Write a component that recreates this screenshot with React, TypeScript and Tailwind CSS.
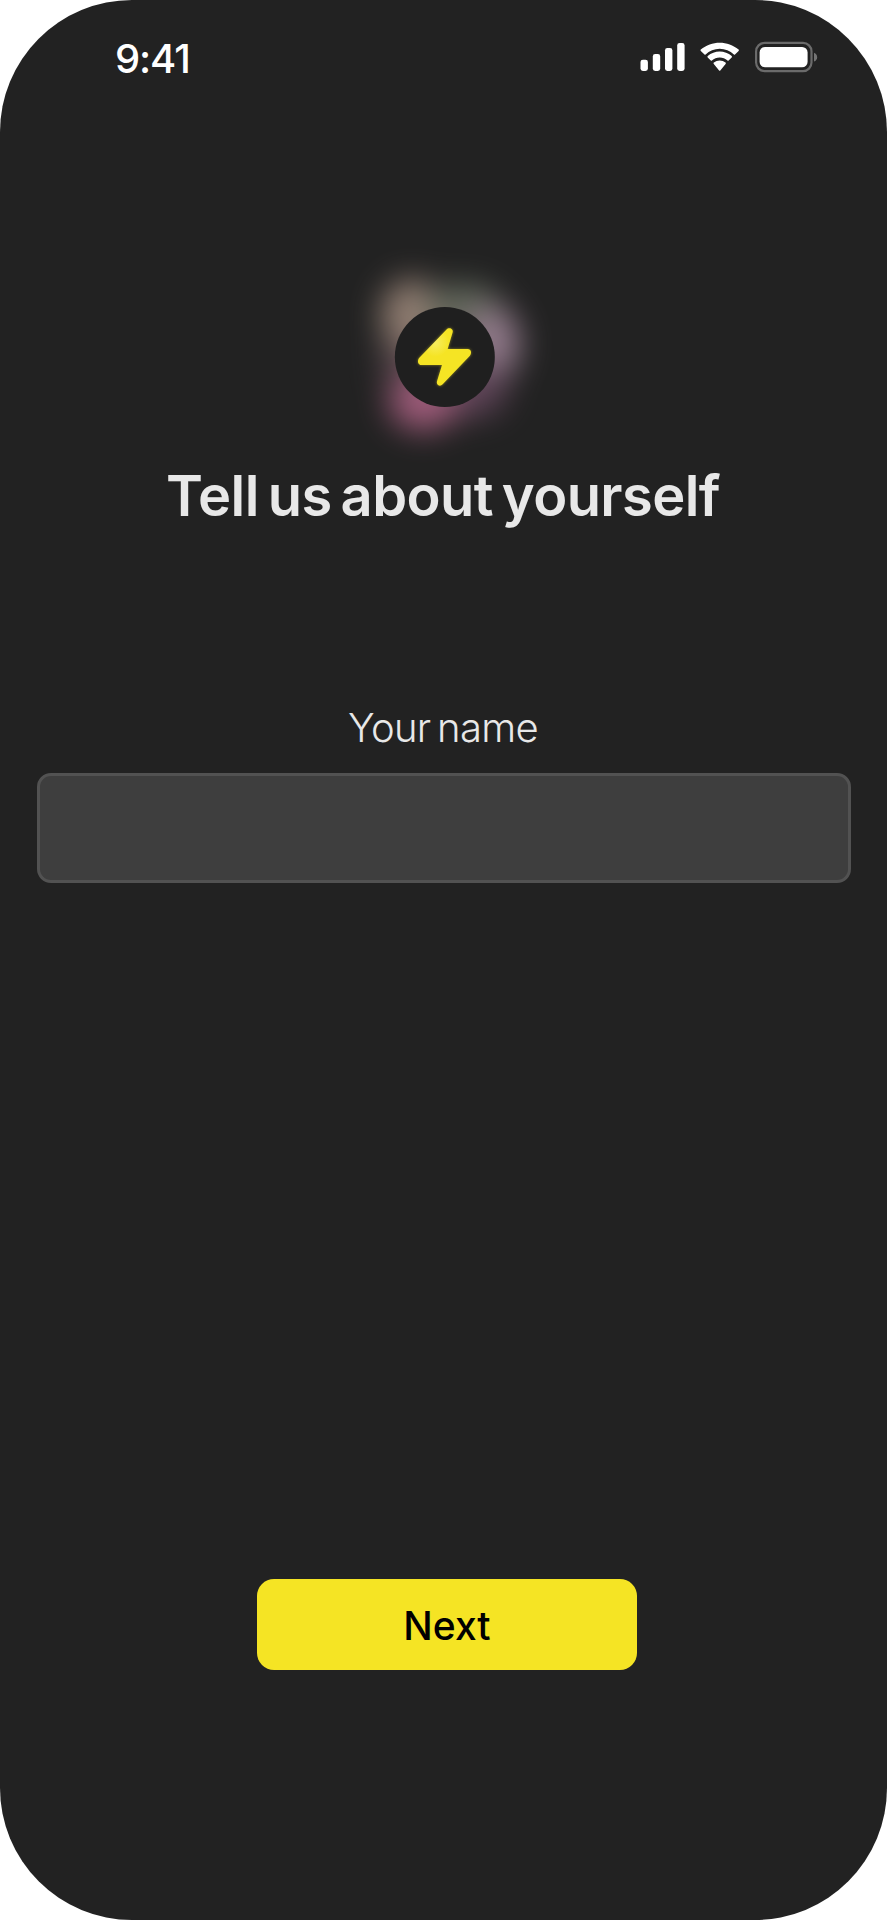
import React from "react";

function SignalIcon() {
  return (
    <svg width="46" height="30" viewBox="0 0 46 30" fill="#fff">
      <rect x="0.5" y="17.7" width="7.4" height="11.3" rx="2.4" />
      <rect x="12.8" y="12" width="7.4" height="17" rx="2.4" />
      <rect x="25" y="6" width="7.4" height="23" rx="2.4" />
      <rect x="37.2" y="1" width="7.4" height="28" rx="2.4" />
    </svg>
  );
}

function WifiIcon() {
  return (
    <svg width="40" height="30" viewBox="0 0 40 30" fill="#fff">
      <path d="M19.7 6.7c5.3 0 10.4 2.1 14.2 5.7.3.3.8.3 1.1 0l3.6-3.4c.4-.4.4-1 0-1.4C28-1.6 11.4-1.6.8 7.6c-.4.4-.4 1 0 1.4l3.7 3.4c.3.3.8.3 1.1 0C9.3 8.8 14.4 6.7 19.7 6.7z" />
      <path d="M19.7 15.5c2.9 0 5.7 1.1 7.8 3 .3.3.8.3 1.1 0l3.1-3c.4-.4.4-1 0-1.4-6.7-6.2-17.3-6.2-24 0-.4.4-.4 1 0 1.4l3.1 3c.3.3.8.3 1.1 0 2.1-1.9 4.9-3 7.8-3z" />
      <path d="M25.6 21.9c.4-.4.4-1-.1-1.3-3.3-2.8-8.3-2.8-11.6 0-.5.3-.5.9-.1 1.3l5.3 6.5c.3.4.9.4 1.2 0z" />
    </svg>
  );
}

function BatteryIcon() {
  return (
    <svg width="64" height="32" viewBox="0 0 64 32">
      <rect x="1.1" y="1.9" width="55.4" height="28.2" rx="8.5" fill="none" stroke="#6b6b6b" strokeWidth="2.2" />
      <rect x="4.6" y="5.9" width="48" height="20.4" rx="5.5" fill="#fff" />
      <path d="M59 11.8v8.8c2-.8 3.2-2.5 3.2-4.4s-1.2-3.6-3.2-4.4z" fill="#747474" />
    </svg>
  );
}

function StatusBar() {
  return (
    <header className="flex h-[116px] w-full items-start justify-between pl-[115px]">
      <span className="mt-[35px] text-[40px] leading-[48px] font-medium tracking-[-1.1px] text-white">9:41</span>
      <div className="mr-[68px] flex items-start pt-[41px]">
        <div className="mt-px mr-[14px]">
          <SignalIcon />
        </div>
        <div className="mt-px mr-[15px]">
          <WifiIcon />
        </div>
        <BatteryIcon />
      </div>
    </header>
  );
}

const BOLT =
  "M319 269 C327 260 341 266 338 277 L323 327 H383 C394 327 396 340 389 348 L308 433 C300 442 288 435 291 424 L306 375 H245 C233 375 231 361 238 353 Z";

function Logo() {
  return (
    <svg className="ml-[13px] block" width="240" height="240" viewBox="-30 -30 720 720">
      <defs>
        <filter id="glow" x="-50%" y="-50%" width="200%" height="200%" colorInterpolationFilters="sRGB">
          <feGaussianBlur stdDeviation="48" />
        </filter>
        <filter id="halo" x="-30%" y="-30%" width="160%" height="160%" colorInterpolationFilters="sRGB">
          <feGaussianBlur stdDeviation="4" />
        </filter>
        <radialGradient id="shine" gradientUnits="userSpaceOnUse" cx="286" cy="308" r="42">
          <stop offset="0" stopColor="#f7ee60" />
          <stop offset="1" stopColor="#f5e424" />
        </radialGradient>
      </defs>
      <g filter="url(#glow)" opacity="0.85">
        <circle cx="314" cy="345" r="190" fill="#5c4a50" />
        <ellipse cx="215" cy="225" rx="92" ry="108" fill="#a58e80" />
        <ellipse cx="370" cy="205" rx="115" ry="72" fill="#6d7465" />
        <ellipse cx="460" cy="310" rx="80" ry="112" fill="#a78b9f" />
        <ellipse cx="400" cy="450" rx="100" ry="80" fill="#684960" />
        <ellipse cx="250" cy="485" rx="104" ry="86" fill="#b5668a" />
      </g>
      <circle cx="314.5" cy="351" r="150" fill="#1f1f1f" />
      <path d={BOLT} fill="#f5e424" opacity="0.5" filter="url(#halo)" />
      <path d={BOLT} fill="url(#shine)" />
    </svg>
  );
}

export default function App() {
  return (
    <div className="h-[1920px] w-[887px] bg-white font-['Inter',sans-serif]">
      <main className="flex h-full w-full flex-col items-center overflow-hidden rounded-[132px] bg-[#222222]">
        <StatusBar />
        <div className="mt-[114px]">
          <Logo />
        </div>
        <h1 className="-mt-[9px] mr-px text-[56px] leading-[70px] font-semibold tracking-[-0.6px] whitespace-nowrap text-[#e8e8e8] [word-spacing:-4.5px]">
          Tell us about yourself
        </h1>
        <label
          htmlFor="name"
          className="mt-[172px] mr-px text-[40px] leading-[50px] font-light tracking-[-0.7px] text-[#e8e8e8] [word-spacing:-4px]"
        >
          Your name
        </label>
        <input
          id="name"
          className="mt-[20px] h-[110px] w-[814px] shrink-0 rounded-[14px] border-3 border-[#525252] bg-[#3e3e3e] px-6 text-[36px] text-white outline-none"
        />
        <button className="mt-[696px] ml-[7px] h-[91px] w-[380px] shrink-0 rounded-[17px] bg-[#f5e424] pt-[4px] text-[39px] font-medium text-black">
          Next
        </button>
      </main>
    </div>
  );
}
